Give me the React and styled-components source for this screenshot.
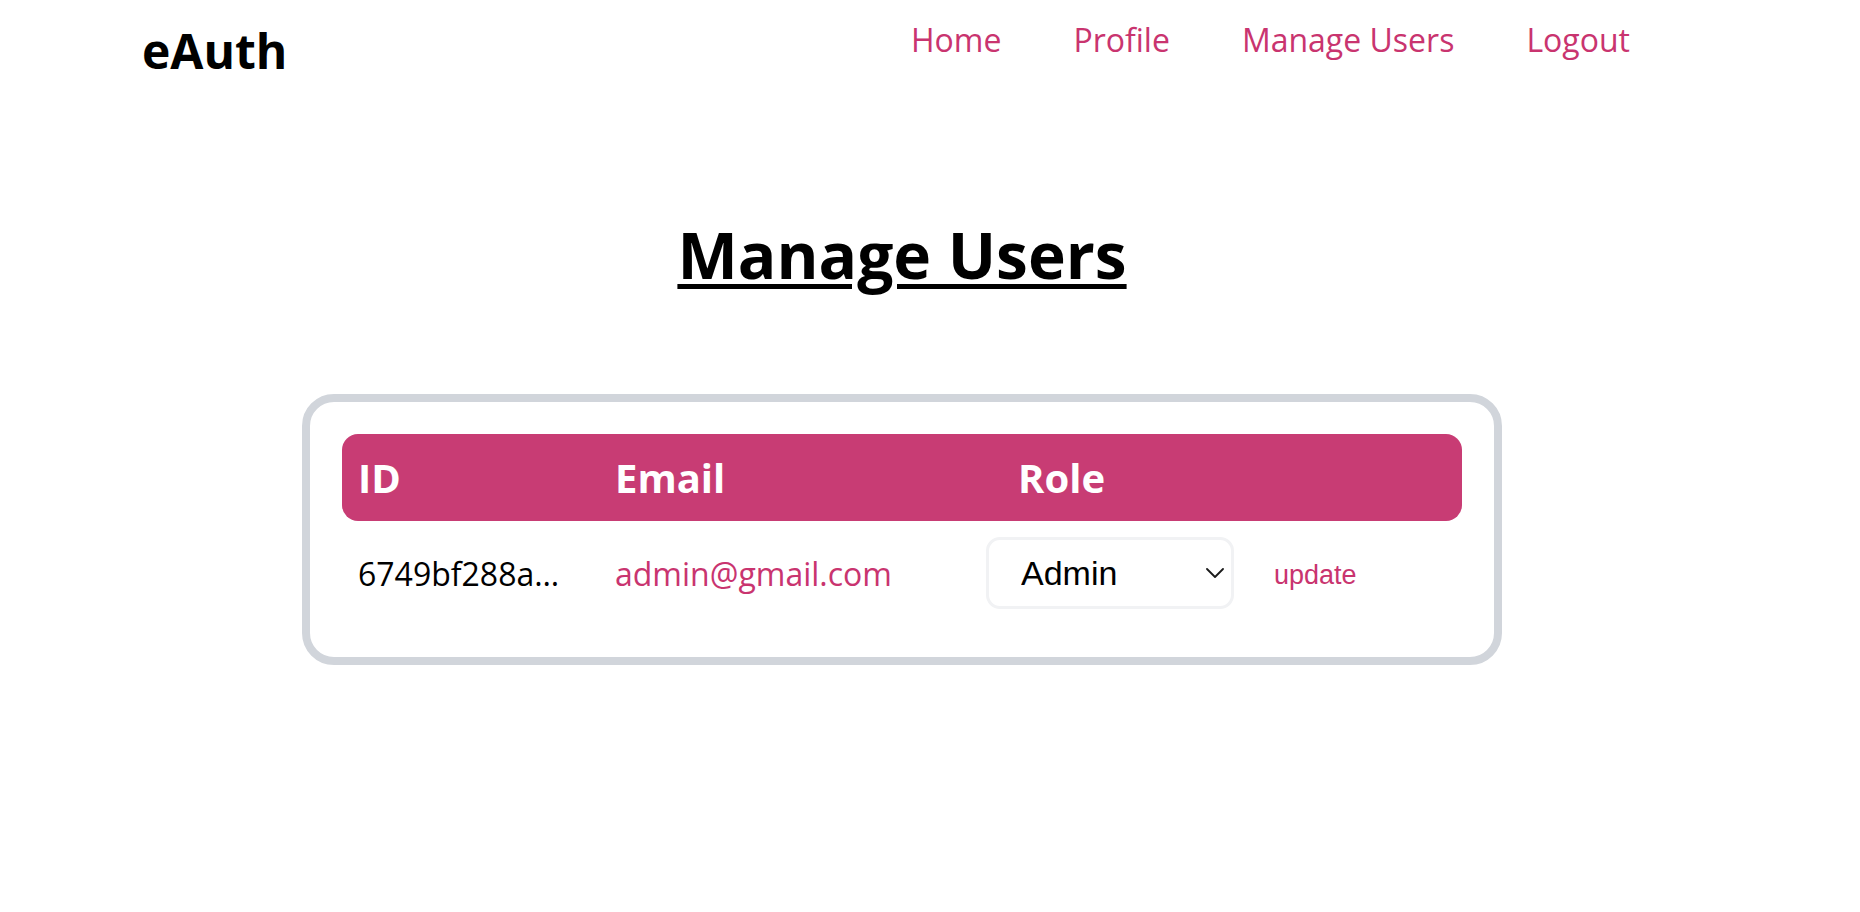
import React from "react";
import styled, { createGlobalStyle } from "styled-components";

const GlobalStyle = createGlobalStyle`
  body {
    margin: 0;
    background: #ffffff;
    font-family: "Open Sans", "Noto Sans", sans-serif;
    color: #000000;
  }
`;

const Header = styled.header`
  display: flex;
  align-items: flex-start;
  justify-content: space-between;
  padding: 18px 230px 0 142px;
`;

const Logo = styled.div`
  font-size: 48px;
  font-weight: 700;
`;

const Nav = styled.nav`
  display: flex;
  gap: 72px;
`;

const NavLink = styled.a`
  font-size: 32px;
  color: #c9346f;
  text-decoration: none;
  cursor: pointer;
`;

const Main = styled.main`
  display: flex;
  flex-direction: column;
  align-items: center;
  padding-right: 56px;
`;

const Title = styled.h1`
  margin: 128px 0 96px;
  font-size: 64px;
  font-weight: 700;
  text-decoration: underline;
  text-decoration-thickness: 5px;
  text-underline-offset: 5px;
`;

const Card = styled.div`
  box-sizing: border-box;
  width: 1200px;
  border: 8px solid #d1d5db;
  border-radius: 32px;
  padding: 32px;
`;

const columns = "257px 371px 1fr";

const HeadRow = styled.div`
  display: grid;
  grid-template-columns: ${columns};
  background: #c83c74;
  border-radius: 16px;
  color: #ffffff;
`;

const HeadCell = styled.div`
  padding: 16px 16px 16px ${(p) => p.$indent || 16}px;
  font-size: 40px;
  font-weight: 700;
`;

const BodyRow = styled.div`
  display: grid;
  grid-template-columns: ${columns};
  align-items: center;
`;

const IdCell = styled.div`
  padding: 16px 27px 16px 16px;
  font-size: 32px;
  white-space: nowrap;
  overflow: hidden;
  text-overflow: ellipsis;
`;

const EmailCell = styled.div`
  padding: 16px;
  font-size: 32px;
  color: #c9346f;
  white-space: nowrap;
`;

const ActionCell = styled.div`
  display: flex;
  align-items: center;
  gap: 40px;
  padding: 16px;
`;

const SelectWrap = styled.div`
  position: relative;
  display: inline-flex;
`;

const RoleSelect = styled.select`
  appearance: none;
  box-sizing: border-box;
  width: 248px;
  height: 72px;
  padding: 0 40px 0 32px;
  border: 3px solid #f1f2f4;
  border-radius: 14px;
  background: #ffffff;
  font-family: "Liberation Sans", Arial, sans-serif;
  font-size: 34px;
  color: #000000;
  outline: none;
`;

const Chevron = styled.svg`
  position: absolute;
  right: 10px;
  top: 50%;
  transform: translateY(-50%);
  pointer-events: none;
`;

const UpdateButton = styled.button`
  border: none;
  background: none;
  padding: 0;
  margin-top: 4px;
  font-family: "Liberation Sans", Arial, sans-serif;
  font-size: 27px;
  color: #c9346f;
  cursor: pointer;
`;

const users = [
  { id: "6749bf288ad41c2e5f7b9a03", email: "admin@gmail.com", role: "admin" },
];

export default function App() {
  return (
    <>
      <GlobalStyle />
      <Header>
        <Logo>eAuth</Logo>
        <Nav>
          <NavLink>Home</NavLink>
          <NavLink>Profile</NavLink>
          <NavLink>Manage Users</NavLink>
          <NavLink>Logout</NavLink>
        </Nav>
      </Header>
      <Main>
        <Title>Manage Users</Title>
        <Card>
          <HeadRow>
            <HeadCell>ID</HeadCell>
            <HeadCell>Email</HeadCell>
            <HeadCell $indent={48}>Role</HeadCell>
          </HeadRow>
          {users.map((u) => (
            <BodyRow key={u.id}>
              <IdCell>{u.id}</IdCell>
              <EmailCell>{u.email}</EmailCell>
              <ActionCell>
                <SelectWrap>
                  <RoleSelect defaultValue={u.role}>
                    <option value="user">User</option>
                    <option value="admin">Admin</option>
                  </RoleSelect>
                  <Chevron width="18" height="10" viewBox="0 0 18 10">
                    <path d="M1 1l8 8 8-8" fill="none" stroke="#1a1a1a" strokeWidth="1.8" strokeLinecap="round" strokeLinejoin="round" />
                  </Chevron>
                </SelectWrap>
                <UpdateButton>update</UpdateButton>
              </ActionCell>
            </BodyRow>
          ))}
        </Card>
      </Main>
    </>
  );
}
